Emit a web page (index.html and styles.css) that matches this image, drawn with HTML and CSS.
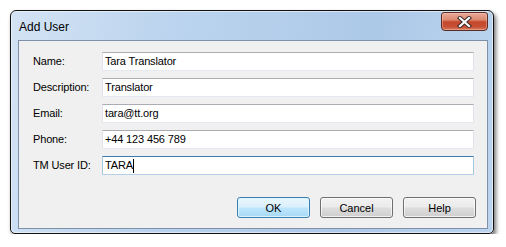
FILE: index.html
```html
<!DOCTYPE html>
<html>
<head>
<meta charset="utf-8">
<link rel="stylesheet" href="styles.css">
</head>
<body>
<div class="window">
  <div class="titlebar">
    <span class="title">Add User</span>
    <div class="close">
      <svg width="15" height="12" viewBox="0 0 15 12">
        <path d="M3 2 L12 10 M12 2 L3 10" stroke="#3a2a28" stroke-width="4.2" stroke-linecap="square"/>
        <path d="M3 2 L12 10 M12 2 L3 10" stroke="#ffffff" stroke-width="2.2" stroke-linecap="square"/>
      </svg>
    </div>
  </div>
  <div class="client">
    <div class="form">
      <label class="lbl">Name:</label>
      <div class="field">Tara Translator</div>
      <label class="lbl">Description:</label>
      <div class="field">Translator</div>
      <label class="lbl">Email:</label>
      <div class="field">tara@tt.org</div>
      <label class="lbl">Phone:</label>
      <div class="field">+44 123 456 789</div>
      <label class="lbl">TM User ID:</label>
      <div class="field focus">TARA<span class="caret"></span></div>
    </div>
    <div class="buttons">
      <div class="btn default">OK</div>
      <div class="btn">Cancel</div>
      <div class="btn">Help</div>
    </div>
  </div>
</div>
</body>
</html>
```

FILE: styles.css
```css
html, body {
  margin: 0;
  padding: 0;
  background: #ffffff;
}

body {
  font-family: "Liberation Sans", Arial, sans-serif;
  font-size: 11px;
  color: #000;
}

.window {
  box-sizing: border-box;
  margin: 10px 0 0 10px;
  width: 484px;
  height: 224px;
  border: 1px solid #111;
  border-radius: 6px 6px 5px 5px;
  background: linear-gradient(100deg, #d3e3f4 0%, #bcd4ee 30%, #adc9e8 70%, #bcd4ee 100%);
  box-shadow: 2px 3px 4px rgba(0, 0, 0, 0.55), inset 0 0 0 1px rgba(255, 255, 255, 0.5);
  display: flex;
  flex-direction: column;
}

.titlebar {
  height: 29px;
  display: flex;
  align-items: flex-start;
  padding-left: 8px;
}

.title {
  font-family: "Liberation Sans", Arial, sans-serif;
  font-size: 12px;
  color: #000;
  margin-top: 9px;
}

.close {
  margin-left: auto;
  margin-right: 5px;
  margin-top: 1px;
  width: 47px;
  height: 19px;
  box-sizing: border-box;
  border: 1px solid #5b2a22;
  border-radius: 3px 3px 4px 4px;
  background: linear-gradient(to bottom, #e9a996 0%, #dc8a72 40%, #c6482d 52%, #c74f33 80%, #d87a5e 100%);
  box-shadow: inset 0 0 0 1px rgba(255, 220, 210, 0.35);
  display: flex;
  align-items: center;
  justify-content: center;
}

.client {
  flex: 1;
  margin: 0 5px 4px 7px;
  background: #f0f0f0;
  border: 1px solid #7f91a8;
  display: flex;
  flex-direction: column;
  padding: 11px 11px 0 14px;
}

.form {
  display: grid;
  grid-template-columns: 69px 372px;
  grid-auto-rows: 19px;
  row-gap: 7px;
  align-items: center;
}

.lbl {
  line-height: 19px;
  letter-spacing: -0.15px;
}

.field {
  box-sizing: border-box;
  height: 19px;
  background: #fff;
  border: 1px solid #e2e3ea;
  border-top-color: #abadb3;
  border-bottom-color: #e3e9ef;
  border-radius: 1px;
  padding-left: 2px;
  line-height: 17px;
  display: flex;
  align-items: center;
  letter-spacing: -0.15px;
}

.field.focus {
  border-color: #b5cfe7;
  border-top-color: #3d7bad;
  border-left-color: #a4c9e3;
  border-right-color: #a4c9e3;
}

.caret {
  display: inline-block;
  width: 1px;
  height: 14px;
  background: #000;
}

.buttons {
  display: flex;
  justify-content: flex-end;
  gap: 10px;
  margin-top: 22px;
}

.btn {
  box-sizing: border-box;
  width: 73px;
  height: 21px;
  border: 1px solid #707070;
  border-radius: 3px;
  background: linear-gradient(to bottom, #f2f2f2 0%, #ebebeb 48%, #dddddd 52%, #cfcfcf 100%);
  box-shadow: inset 0 0 0 1px rgba(255, 255, 255, 0.7);
  display: flex;
  align-items: center;
  justify-content: center;
}

.btn.default {
  border-color: #3c7fb1;
  background: linear-gradient(to bottom, #eaf6fd 0%, #d9f0fc 48%, #bee6fd 52%, #a7d9f5 100%);
  box-shadow: inset 0 0 0 1px rgba(220, 245, 255, 0.9);
}
```
